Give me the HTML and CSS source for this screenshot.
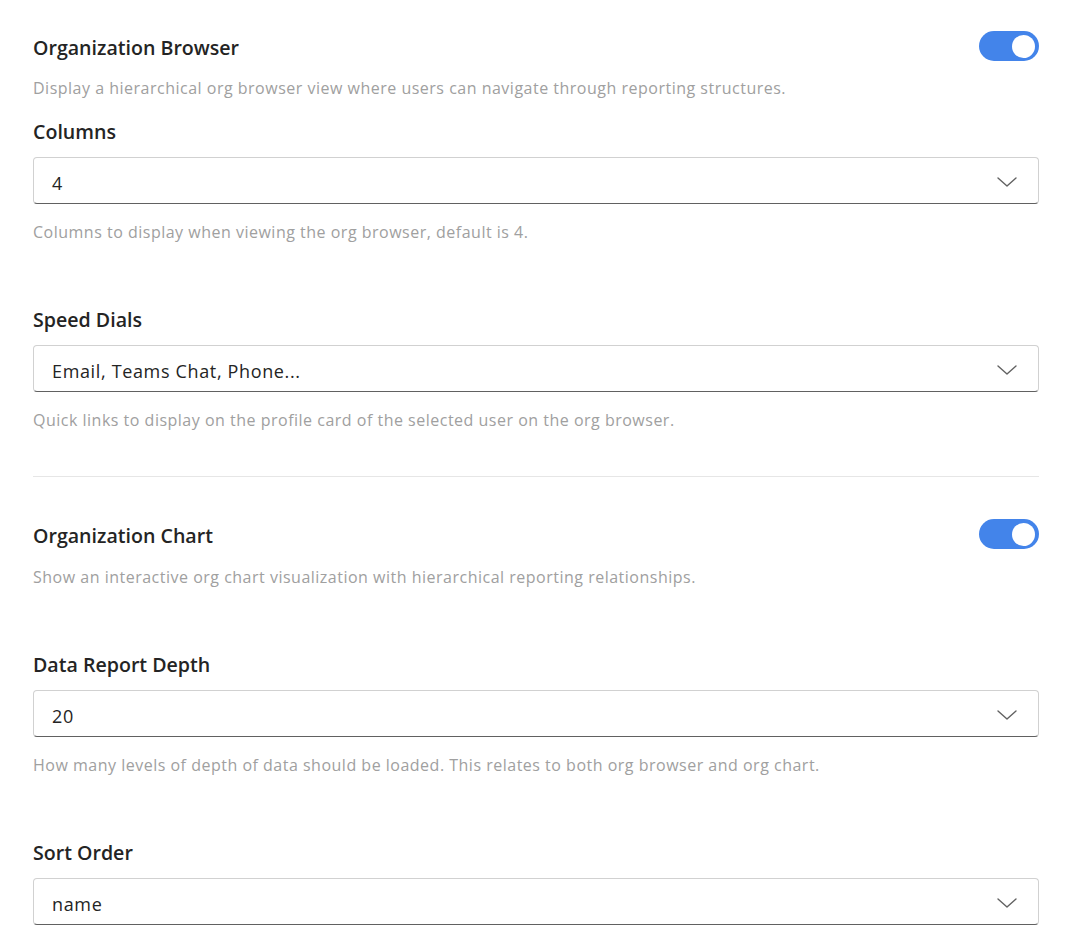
FILE: index.html
```html
<!DOCTYPE html>
<html lang="en">
<head>
<meta charset="utf-8">
<title>Settings</title>
<link rel="stylesheet" href="styles.css">
</head>
<body>
<main class="settings">
  <section class="group">
    <div class="group-head">
      <h2 class="group-title">Organization Browser</h2>
      <span class="toggle" role="switch" aria-checked="true"><span class="knob"></span></span>
    </div>
    <p class="group-desc">Display a hierarchical org browser view where users can navigate through reporting structures.</p>

    <div class="field field-first">
      <label class="field-label">Columns</label>
      <div class="dropdown"><span class="dropdown-value">4</span><svg class="chev" viewBox="0 0 20 10" width="20" height="10"><path d="M1 1 L10 9 L19 1" fill="none" stroke="#616161" stroke-width="1.4" stroke-linecap="round" stroke-linejoin="round"/></svg></div>
      <p class="field-help">Columns to display when viewing the org browser, default is 4.</p>
    </div>

    <div class="field">
      <label class="field-label">Speed Dials</label>
      <div class="dropdown"><span class="dropdown-value">Email, Teams Chat, Phone...</span><svg class="chev" viewBox="0 0 20 10" width="20" height="10"><path d="M1 1 L10 9 L19 1" fill="none" stroke="#616161" stroke-width="1.4" stroke-linecap="round" stroke-linejoin="round"/></svg></div>
      <p class="field-help">Quick links to display on the profile card of the selected user on the org browser.</p>
    </div>
  </section>

  <hr class="divider">

  <section class="group group-second">
    <div class="group-head">
      <h2 class="group-title">Organization Chart</h2>
      <span class="toggle" role="switch" aria-checked="true"><span class="knob"></span></span>
    </div>
    <p class="group-desc">Show an interactive org chart visualization with hierarchical reporting relationships.</p>

    <div class="field">
      <label class="field-label">Data Report Depth</label>
      <div class="dropdown"><span class="dropdown-value">20</span><svg class="chev" viewBox="0 0 20 10" width="20" height="10"><path d="M1 1 L10 9 L19 1" fill="none" stroke="#616161" stroke-width="1.4" stroke-linecap="round" stroke-linejoin="round"/></svg></div>
      <p class="field-help">How many levels of depth of data should be loaded. This relates to both org browser and org chart.</p>
    </div>

    <div class="field">
      <label class="field-label">Sort Order</label>
      <div class="dropdown"><span class="dropdown-value">name</span><svg class="chev" viewBox="0 0 20 10" width="20" height="10"><path d="M1 1 L10 9 L19 1" fill="none" stroke="#616161" stroke-width="1.4" stroke-linecap="round" stroke-linejoin="round"/></svg></div>
    </div>
  </section>
</main>
</body>
</html>
```

FILE: styles.css
```css
* { box-sizing: border-box; }

html, body {
  margin: 0;
  padding: 0;
  background: #ffffff;
}

body {
  font-family: "Open Sans", "Noto Sans", "Liberation Sans", sans-serif;
  color: #242424;
}

.settings {
  padding: 31px 31px 0 33px;
  display: flex;
  flex-direction: column;
}

.group {
  display: flex;
  flex-direction: column;
}

.group-head {
  display: flex;
  align-items: center;
  justify-content: space-between;
  height: 30px;
}

.group-title {
  margin: 0;
  font-size: 19.6px;
  font-weight: 600;
  line-height: 28px;
  color: #242424;
  padding-top: 3px;
}

.toggle {
  width: 60px;
  height: 30px;
  border-radius: 15px;
  background: #4384ea;
  display: flex;
  align-items: center;
  justify-content: flex-end;
  padding-right: 4px;
}

.knob {
  width: 23px;
  height: 23px;
  border-radius: 50%;
  background: #ffffff;
}

.group-desc {
  margin: 16px 0 0;
  font-size: 16px;
  letter-spacing: 0.5px;
  line-height: 22px;
  color: #a0a0a0;
}

.group-second .group-desc {
  margin-top: 17px;
}

.field {
  display: flex;
  flex-direction: column;
  margin-top: 63px;
}

.field-first {
  margin-top: 19px;
}

.field-label {
  font-size: 19.6px;
  font-weight: 600;
  line-height: 28px;
  color: #242424;
}

.dropdown {
  margin-top: 11px;
  height: 47px;
  border: 1px solid #d1d1d1;
  border-bottom-color: #616161;
  border-radius: 4px;
  display: flex;
  align-items: center;
  justify-content: space-between;
  padding: 0 21px 0 18px;
}

.dropdown-value {
  font-size: 18px;
  letter-spacing: 0.65px;
  color: #242424;
  line-height: 24px;
  padding-top: 4px;
}

.chev {
  display: block;
  margin-top: 2px;
}

.field-help {
  margin: 17px 0 0;
  font-size: 16px;
  letter-spacing: 0.5px;
  line-height: 22px;
  color: #a0a0a0;
}

.divider {
  margin: 45px 0 0;
  border: 0;
  border-top: 1px solid #e6e6e6;
  height: 0;
}

.divider + .group {
  margin-top: 42px;
}
```
